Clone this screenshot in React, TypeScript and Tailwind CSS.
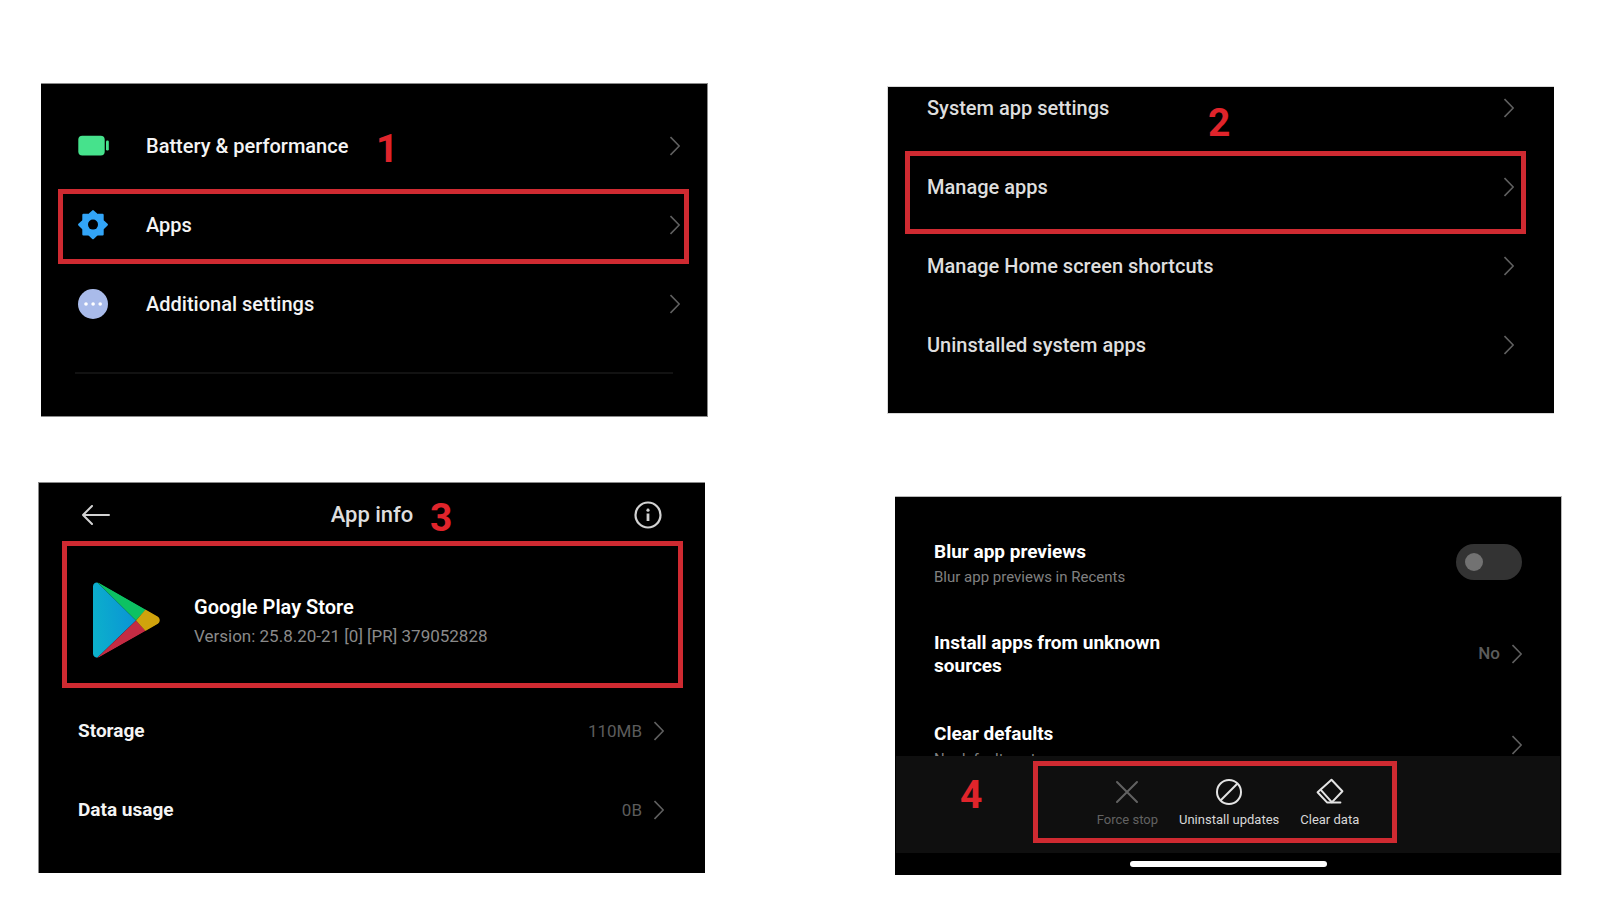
import type { ReactNode } from 'react'

function Chevron() {
  return (
    <svg className="h-5 w-[10px] shrink-0" viewBox="0 0 10 20" fill="none" stroke="#606060" strokeWidth="1.6" aria-hidden="true">
      <path d="M0.5 1L9.2 10L0.5 19" />
    </svg>
  )
}

function BatteryIcon() {
  return (
    <svg className="h-[30px] w-8" viewBox="0 0 32 30" aria-hidden="true">
      <rect x="0.3" y="4.8" width="26.4" height="19.6" rx="4" fill="#46e28c" />
      <rect x="28" y="9.5" width="2.8" height="10" rx="1.2" fill="#46e28c" />
    </svg>
  )
}

function GearIcon() {
  return (
    <svg className="h-[30px] w-8" viewBox="0 0 32 30" aria-hidden="true">
      <path
        d="M15 1.2L18.4 4.4Q19 4.9 20 4.9H24.6V9.6Q24.6 10.6 25.2 11.2L28.8 14.6L25.2 18.2Q24.6 18.8 24.6 19.8V24.4H20Q19 24.4 18.4 25L15 28.2L11.6 25Q11 24.4 10 24.4H5.4V19.8Q5.4 18.8 4.8 18.2L1.2 14.6L4.8 11.2Q5.4 10.6 5.4 9.6V4.9H10Q11 4.9 11.6 4.4Z"
        fill="#32a5f8"
        stroke="#32a5f8"
        strokeWidth="2.2"
        strokeLinejoin="round"
      />
      <circle cx="15" cy="14.6" r="5" fill="#000" />
    </svg>
  )
}

function MoreIcon() {
  return (
    <svg className="h-[30px] w-8" viewBox="0 0 32 30" aria-hidden="true">
      <circle cx="15" cy="15" r="15" fill="#a9bbea" />
      <circle cx="8" cy="15" r="1.8" fill="#fff" />
      <circle cx="15.1" cy="15" r="1.8" fill="#fff" />
      <circle cx="22.2" cy="15" r="1.8" fill="#fff" />
    </svg>
  )
}

function PlayIcon() {
  return (
    <svg className="h-[76px] w-[68px] shrink-0" viewBox="0 0 68 76" aria-hidden="true">
      <defs>
        <linearGradient id="play-blue" x1="0" y1="0.6" x2="1" y2="0.4">
          <stop offset="0" stopColor="#0cb0cb" />
          <stop offset="1" stopColor="#0a93d6" />
        </linearGradient>
        <clipPath id="play-shape">
          <path d="M0 4.5C0 1 3.5 -0.6 6.6 1.2L64.2 34.2C67.6 36.2 67.6 40.2 64.2 42.2L6.6 75C3.5 76.8 0 75 0 71.6Z" />
        </clipPath>
      </defs>
      <g clipPath="url(#play-shape)">
        <path d="M0 0H4L43 38.4L4 76H0Z" fill="url(#play-blue)" />
        <path d="M3 -1L53 27.5L43 38.4Z" fill="#0dc163" />
        <path d="M3 77L53 49L43 38.4Z" fill="#c42b43" />
        <path d="M53 27L43 38.4L53 49.4L70 39V37Z" fill="#d0a30c" />
      </g>
    </svg>
  )
}

function Panel({ className, children }: { className: string; children: ReactNode }) {
  return <section className={`relative bg-black ${className}`}>{children}</section>
}

function Highlight({ className }: { className: string }) {
  return <div className={`pointer-events-none absolute border-5 border-[#cf2a31] ${className}`} />
}

function Step({ className, children }: { className: string; children: ReactNode }) {
  return (
    <span className={`absolute text-[39px] leading-[40px] font-bold text-[#e0242b] ${className}`}>{children}</span>
  )
}

function Row({ icon, label, value }: { icon?: ReactNode; label: string; value?: string }) {
  return (
    <button type="button" className="flex h-6 w-full items-center text-left leading-6">
      {icon && <span className="mr-[36px]">{icon}</span>}
      <span className="flex-1">{label}</span>
      {value && <span className="mr-3 text-[17px] font-normal text-[#5c5c5c]">{value}</span>}
      <Chevron />
    </button>
  )
}

export default function App() {
  return (
    <main className="grid min-h-screen grid-cols-2 items-start gap-x-[190px] bg-white px-[38px] font-['Roboto',sans-serif]">
      <div className="flex flex-col gap-[65px] pt-[83px]">
        <Panel className="-mr-[3px] ml-[3px] border-y border-r border-[#8a8a8a] pt-[50px]">
          <div className="flex flex-col gap-[55px] pr-[27px] pl-[37px] text-[20px] font-medium text-[#f4f4f4]">
            <Row icon={<BatteryIcon />} label="Battery & performance" />
            <Row icon={<GearIcon />} label="Apps" />
            <Row icon={<MoreIcon />} label="Additional settings" />
          </div>
          <hr className="mt-[56px] mr-[34px] mb-[42px] ml-[34px] border-t-2 border-[#121212]" />
          <Highlight className="top-[105px] right-[18px] left-[17px] h-[75px]" />
          <Step className="top-[45px] left-[335px]">1</Step>
        </Panel>

        <Panel className="border-t border-l border-[#8a8a8a] pb-[51px]">
          <header className="grid h-16 grid-cols-[1fr_auto_1fr] items-center px-[43px]">
            <button type="button" aria-label="Back" className="justify-self-start">
              <svg className="h-5 w-7" viewBox="0 0 28 20" fill="none" stroke="#d2d2d2" strokeWidth="2" strokeLinecap="round" strokeLinejoin="round">
                <path d="M27 10H1M10 1L1 10L10 19" />
              </svg>
            </button>
            <h2 className="text-[22px] leading-6 font-medium text-[#dedede]">App info</h2>
            <button type="button" aria-label="Details" className="justify-self-end">
              <svg className="size-7" viewBox="0 0 28 28" fill="none" stroke="#d2d2d2" strokeWidth="2.2">
                <circle cx="14" cy="14" r="12.5" />
                <path d="M14 12.5V20" strokeWidth="2.8" />
                <circle cx="14" cy="9.2" r="1.6" fill="#d2d2d2" stroke="none" />
              </svg>
            </button>
          </header>
          <div className="mt-[10px] flex h-[126px] items-center gap-[33px] pl-[54px]">
            <PlayIcon />
            <div className="pt-[3px]">
              <h3 className="text-[20px] leading-6 font-semibold text-white">Google Play Store</h3>
              <p className="mt-[5px] text-[17px] leading-6 text-[#8a8a8a]">Version: 25.8.20-21 [0] [PR] 379052828</p>
            </div>
          </div>
          <div className="mt-[36px] flex flex-col gap-[55px] pr-[41px] pl-[39px] text-[19px] font-bold text-[#f4f4f4]">
            <Row label="Storage" value="110MB" />
            <Row label="Data usage" value="0B" />
          </div>
          <Highlight className="top-[58px] right-[22px] left-[23px] h-[147px]" />
          <Step className="top-[15px] left-[391px]">3</Step>
        </Panel>
      </div>

      <div className="flex flex-col gap-[82px] pt-[86px]">
        <Panel className="mr-[8px] -ml-[8px] border-y border-l border-[#d8d8d8] pt-[9px] pb-[56px]">
          <div className="flex flex-col gap-[55px] pr-[40px] pl-[39px] text-[20px] font-medium text-[#dedede]">
            <Row label="System app settings" />
            <Row label="Manage apps" />
            <Row label="Manage Home screen shortcuts" />
            <Row label="Uninstalled system apps" />
          </div>
          <Highlight className="top-[64px] right-[28px] left-[17px] h-[83px]" />
          <Step className="top-[16px] left-[320px]">2</Step>
        </Panel>

        <Panel className="border-t border-r border-[#b8b8b8]">
          <div className="h-[259px] overflow-hidden pt-[43px] pr-[39px] pl-[39px] font-bold text-white">
            <div className="flex h-[46px] items-start justify-between">
              <div>
                <label htmlFor="blur" className="block text-[19px] leading-[23px]">Blur app previews</label>
                <p className="mt-[2px] text-[15px] leading-6 font-normal text-[#808080]">Blur app previews in Recents</p>
              </div>
              <input
                id="blur"
                type="checkbox"
                role="switch"
                className="mt-1 flex h-9 w-[66px] appearance-none items-center rounded-full bg-[#333333] px-[9px] before:size-[18px] before:rounded-full before:bg-[#727272] checked:justify-end"
              />
            </div>
            <button type="button" className="mt-[45px] flex h-[46px] w-full items-center text-left">
              <span className="max-w-[250px] text-[19px] leading-[23px]">Install apps from unknown sources</span>
              <span className="mr-3 ml-auto text-[17px] font-medium text-[#5c5c5c]">No</span>
              <Chevron />
            </button>
            <button type="button" className="mt-[45px] flex h-[46px] w-full items-start justify-between text-left">
              <span>
                <span className="block text-[19px] leading-[23px]">Clear defaults</span>
                <span className="mt-[2px] block text-[15px] leading-6 font-normal text-[#808080]">No defaults set</span>
              </span>
              <span className="flex h-[46px] items-center">
                <Chevron />
              </span>
            </button>
          </div>
          <div className="relative mx-px flex h-[97px] justify-center gap-[21px] bg-[#0f0f0f] pt-[22px] text-[13px] leading-4 text-[#d8d8d8]">
            <button type="button" className="flex flex-col items-center gap-[6px] self-start text-[#626262]">
              <svg className="size-7" viewBox="0 0 28 28" fill="none" stroke="currentColor" strokeWidth="2" strokeLinecap="round" aria-hidden="true">
                <path d="M4 4L24 24M24 4L4 24" />
              </svg>
              Force stop
            </button>
            <button type="button" className="flex flex-col items-center gap-[6px] self-start">
              <svg className="size-7" viewBox="0 0 28 28" fill="none" stroke="#e4e4e4" strokeWidth="2" aria-hidden="true">
                <circle cx="14" cy="14" r="12" />
                <path d="M5.5 22.5L22.5 5.5" />
              </svg>
              Uninstall updates
            </button>
            <button type="button" className="flex flex-col items-center gap-[6px] self-start">
              <svg className="size-7" viewBox="0 0 28 28" fill="none" stroke="#e4e4e4" strokeWidth="2" strokeLinecap="round" strokeLinejoin="round" aria-hidden="true">
                <path d="M15.5 1.8L26.4 13.2L15.8 24.4H11L1.6 14.3Z" />
                <path d="M4.8 11.8L16 24.4H24.4" />
              </svg>
              Clear data
            </button>
            <Highlight className="top-[5px] right-[163px] left-[137px] h-[82px]" />
            <Step className="top-[19px] left-[64px]">4</Step>
          </div>
          <div className="flex h-[22px] justify-center pt-[8px]">
            <div className="h-[6px] w-[197px] rounded-full bg-white" />
          </div>
        </Panel>
      </div>
    </main>
  )
}
